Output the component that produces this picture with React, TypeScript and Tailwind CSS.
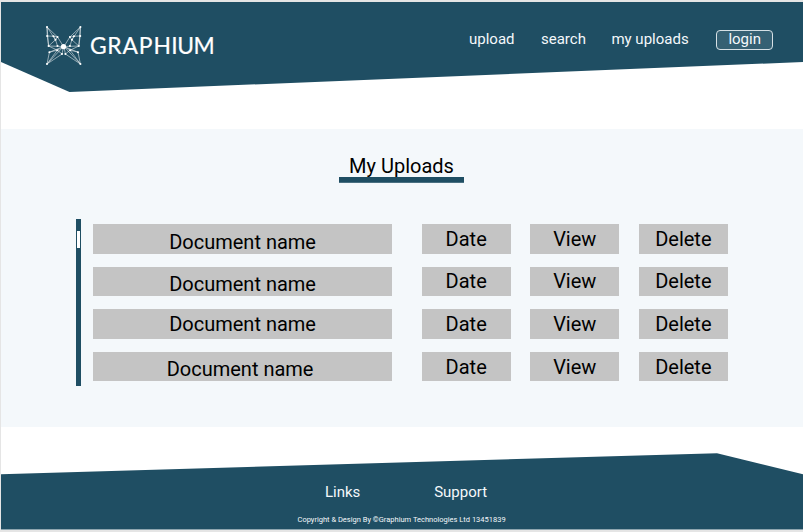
const documents = [
  { label: 'Document name', nudge: 'pt-[6px]' },
  { label: 'Document name', nudge: 'pt-[5px]' },
  { label: 'Document name', nudge: '' },
  { label: 'Document name', nudge: 'pt-[5px] pr-[5px]' },
];

const wingPoints: [number, number][] = [
  [3, 3], [3.2, 12], [9.5, 12.2], [13.5, 13], [11.5, 15.8], [4.6, 22], [13.5, 22],
  [13.3, 26.2], [5.4, 28.2], [18, 30], [3, 40],
];

const wingPath =
  'M3 3L3.2 12L9.5 12.2L13.5 13L3 3L11.5 15.8L4.6 22L3.2 12M9.5 12.2L11.5 15.8L13.5 22M4.6 22L13.3 26.2L19.5 22.5L13.5 13M4.6 22L19.5 22.5M11.5 15.8L13.5 13M3 3L4.6 22M13.3 26.2L5.4 28.2L3 40L13.3 26.2L18 30L3 40L19.5 22.5L18 30M5.4 28.2L19.5 22.5';

function Wing() {
  return (
    <g>
      <path d={wingPath} fill="none" stroke="white" strokeOpacity="0.65" strokeWidth="0.8" />
      {wingPoints.map(([x, y]) => (
        <circle key={`${x}-${y}`} cx={x} cy={y} r="1.05" fill="white" />
      ))}
    </g>
  );
}

function Logo() {
  return (
    <svg width="180" height="48" viewBox="0 0 180 48" role="img" aria-label="Graphium">
      <g transform="translate(0 2)">
        <Wing />
        <g transform="translate(39.4 0) scale(-1 1)">
          <Wing />
        </g>
        <circle cx="19.5" cy="22.6" r="2.6" fill="white" />
      </g>
      <text
        transform="translate(46 31.7) scale(1.02 1)"
        x="0 16.8 31.8 47.8 62.2 79.6 85.6 101.6"
        fontSize="22.4"
        fontWeight="400"
        fill="white"
        stroke="white"
        strokeWidth="0.2"
        fontFamily="Lato, sans-serif"
      >
        GRAPHIUM
      </text>
    </svg>
  );
}

function Cell({ children }: { children: string }) {
  return (
    <div className="flex h-[29.4px] w-[89px] items-center justify-center bg-[#c4c4c4]">{children}</div>
  );
}

export default function App() {
  return (
    <div className="flex h-[532px] w-[803px] flex-col overflow-hidden bg-[#e5e5e5] pt-[2px] pl-px font-[Roboto,sans-serif]">
      <div className="flex h-[527.6px] flex-col bg-white">
        <header className="flex h-[90px] shrink-0 items-start bg-[#1f4e63] text-[15px] leading-[18px] text-[#f4f8fb] [clip-path:polygon(0_0,100%_0,100%_60px,68.5px_90px,0_60px)]">
          <div className="ml-[43px] pt-[20px]">
            <Logo />
          </div>
          <nav className="ml-[245px] flex pt-[28px] whitespace-nowrap">
            <a className="w-[72px]">upload</a>
            <a className="w-[70.4px]">search</a>
            <a className="w-[104.6px]">my uploads</a>
            <a className="flex h-[20px] w-[57.4px] justify-center rounded-[4px] border border-[#d6e0e5] bg-[#356073] leading-[17px]">
              login
            </a>
          </nav>
        </header>

        <main className="mt-[37px] flex h-[298px] shrink-0 flex-col bg-[#f4f8fb] text-black">
          <h1 className="ml-[337.7px] mt-[25px] h-[28.6px] w-[125.6px] bg-[linear-gradient(#1f4e63,#1f4e63)] bg-[length:100%_5.8px] bg-[position:0_100%] bg-no-repeat text-center text-[20px] leading-[24px]">
            My Uploads
          </h1>
          <div className="ml-[74.7px] mt-[36.6px] flex text-[20px] leading-[24px]">
            <div className="h-[167.3px] w-[5.2px] bg-[#1f4e63] px-[1.2px] pt-[11.5px]">
              <div className="h-[17.5px] bg-white" />
            </div>
            <div className="ml-[11.8px] mt-[5px] flex flex-col gap-[13.2px]">
              {documents.map((doc, i) => (
                <div key={i} className="flex gap-[19.6px]">
                  <div
                    className={`mr-[9.6px] flex h-[29.4px] w-[299.8px] items-center justify-center bg-[#c4c4c4] ${doc.nudge}`}
                  >
                    {doc.label}
                  </div>
                  <Cell>Date</Cell>
                  <Cell>View</Cell>
                  <Cell>Delete</Cell>
                </div>
              ))}
            </div>
          </div>
        </main>

        <footer className="mt-auto flex h-[76.4px] shrink-0 flex-col bg-[#1f4e63] text-[#f4f8fb] [clip-path:polygon(0_21px,716px_0,100%_21px,100%_100%,0_100%)]">
          <div className="ml-[324px] mt-[29.5px] flex gap-[73.8px] text-[15px] leading-[18px]">
            <a>Links</a>
            <a>Support</a>
          </div>
          <p className="ml-[296.5px] mt-[14px] text-[7.5px] leading-[10px]">
            Copyright &amp; Design By ©Graphium Technologies Ltd 13451839
          </p>
        </footer>
      </div>
    </div>
  );
}
